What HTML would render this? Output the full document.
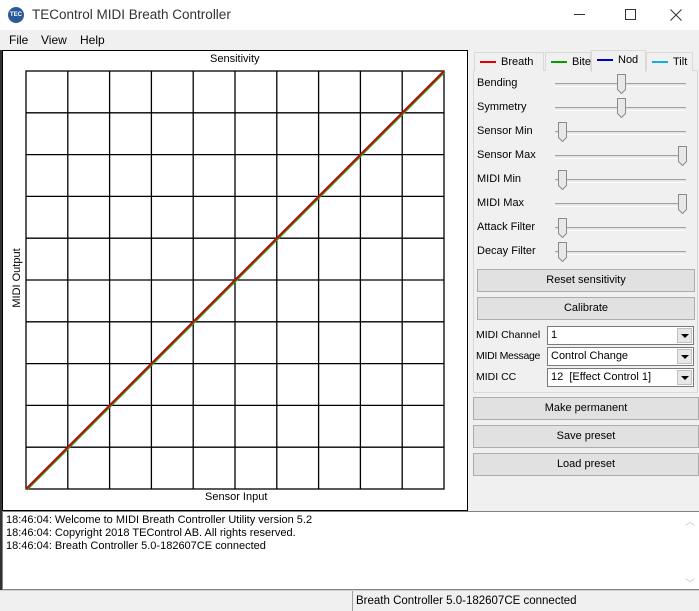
<!DOCTYPE html>
<html><head><style>
*{margin:0;padding:0;box-sizing:border-box}
body{width:699px;height:611px;background:#f0f0f0;font-family:"Liberation Sans",sans-serif;font-size:11px;color:#000;position:relative;overflow:hidden}
.a{position:absolute;white-space:nowrap}
.btn{position:absolute;background:#e1e1e1;border:1px solid #adadad;text-align:center;line-height:21px}
.track{position:absolute;height:4px;border-top:1px solid #a0a0a0;border-bottom:1px solid #fff;background:#e7e7e7;width:131px;left:555px}
.combo{position:absolute;left:547px;width:147px;height:19px;background:#fff;border:1px solid #7a7a7a;padding-left:3px;line-height:17px}
.combo i{position:absolute;right:1px;top:1px;width:15px;height:15px;background:#e8e8e8;border:1px solid #c0c0c0}
.combo i:after{content:"";position:absolute;left:3px;top:5px;border-left:4px solid transparent;border-right:4px solid transparent;border-top:4px solid #000}
.tab{position:absolute;top:52px;height:19px;border:1px solid #d9d9d9;border-bottom:none;background:#f0f0f0;line-height:18px;padding-left:5px;white-space:nowrap}
.tab b{display:inline-block;width:16px;height:2px;vertical-align:middle;margin-right:5px}
</style></head><body>
<div class="a" style="left:0;top:0;width:699px;height:30px;background:#fff"></div>
<div class="a" style="left:8px;top:7px;width:16px;height:16px;border-radius:50%;background:#2a5a9a;color:#fff;font-size:6px;line-height:16px;text-align:center;font-weight:bold">TEC</div>
<div class="a" style="left:32px;top:7px;font-size:13.5px;color:#333">TEControl MIDI Breath Controller</div>
<div class="a" style="left:574px;top:14px;width:11px;height:1px;background:#333"></div>
<div class="a" style="left:625px;top:9px;width:11px;height:11px;border:1px solid #333"></div>
<svg class="a" style="left:670px;top:9px" width="12" height="12"><path d="M0.5 0.5L11.5 11.5M11.5 0.5L0.5 11.5" stroke="#333" stroke-width="1"/></svg>
<div class="a" style="left:9px;top:33px;font-size:12px">File</div>
<div class="a" style="left:41px;top:33px;font-size:12px">View</div>
<div class="a" style="left:80px;top:33px;font-size:12px">Help</div>
<div class="a" style="left:0;top:50px;width:2px;height:540px;background:#333"></div>
<div class="a" style="left:2px;top:50px;width:466px;height:461px;background:#fff;border:1px solid #000"></div>
<div class="a" style="left:210px;top:53px">Sensitivity</div>
<div class="a" style="left:205px;top:491px">Sensor Input</div>
<div class="a" style="left:-13px;top:272px;transform:rotate(-90deg);width:60px;text-align:center">MIDI Output</div>
<svg class="a" style="left:25px;top:70px" width="421" height="421">
<g stroke="#000" stroke-width="1.3" fill="none">
<rect x="1" y="1" width="418" height="418"/>
<path d="M42.8 1V419M84.6 1V419M126.4 1V419M168.2 1V419M210 1V419M251.8 1V419M293.6 1V419M335.4 1V419M377.2 1V419M1 42.8H419M1 84.6H419M1 126.4H419M1 168.2H419M1 210H419M1 251.8H419M1 293.6H419M1 335.4H419M1 377.2H419"/>
</g>
<line x1="1" y1="419" x2="419" y2="1" stroke="#3a9a1a" stroke-width="2" transform="translate(0.8,0.8)"/>
<line x1="1" y1="419" x2="419" y2="1" stroke="#b01010" stroke-width="2"/>
</svg>
<div class="a" style="left:473px;top:70px;width:225px;height:323px;border:1px solid #d9d9d9"></div>
<div class="tab" style="left:474px;width:70px"><b style="background:#e00000"></b>Breath</div>
<div class="tab" style="left:545px;width:46px"><b style="background:#00a000"></b>Bite</div>
<div class="tab" style="left:591px;top:50px;height:22px;width:55px;z-index:2"><b style="background:#0000c0"></b>Nod</div>
<div class="tab" style="left:646px;width:47px"><b style="background:#10b0e0"></b>Tilt</div>
<div class="a" style="left:477px;top:77px">Bending</div>
<div class="a" style="left:477px;top:101px">Symmetry</div>
<div class="a" style="left:477px;top:125px">Sensor Min</div>
<div class="a" style="left:477px;top:149px">Sensor Max</div>
<div class="a" style="left:477px;top:173px">MIDI Min</div>
<div class="a" style="left:477px;top:197px">MIDI Max</div>
<div class="a" style="left:477px;top:221px">Attack Filter</div>
<div class="a" style="left:477px;top:245px">Decay Filter</div>
<div class="track" style="top:83px"></div><div class="track" style="top:107px"></div>
<div class="track" style="top:131px"></div><div class="track" style="top:155px"></div>
<div class="track" style="top:179px"></div><div class="track" style="top:203px"></div>
<div class="track" style="top:227px"></div><div class="track" style="top:251px"></div>
<svg class="a" style="left:0;top:0" width="699" height="270">
<defs><path id="th" d="M0.5 0.5H8.5V15.5L4.5 19.5L0.5 15.5Z" fill="#e8e8e8" stroke="#8a8a8a"/></defs>
<use href="#th" x="617" y="74"/><use href="#th" x="617" y="98"/>
<use href="#th" x="558" y="122"/><use href="#th" x="678" y="146"/>
<use href="#th" x="558" y="170"/><use href="#th" x="678" y="194"/>
<use href="#th" x="558" y="218"/><use href="#th" x="558" y="242"/>
</svg>
<div class="btn" style="left:477px;top:269px;width:218px;height:23px">Reset sensitivity</div>
<div class="btn" style="left:477px;top:297px;width:218px;height:23px">Calibrate</div>
<div class="a" style="left:476px;top:329px;font-size:10.5px">MIDI Channel</div>
<div class="a" style="left:476px;top:350px;font-size:10.5px;letter-spacing:-0.3px">MIDI Message</div>
<div class="a" style="left:476px;top:371px;font-size:10.5px">MIDI CC</div>
<div class="combo" style="top:326px">1<i></i></div>
<div class="combo" style="top:347px">Control Change<i></i></div>
<div class="combo" style="top:368px">12&nbsp; [Effect Control 1]<i></i></div>
<div class="btn" style="left:473px;top:397px;width:226px;height:23px">Make permanent</div>
<div class="btn" style="left:473px;top:425px;width:226px;height:23px">Save preset</div>
<div class="btn" style="left:473px;top:453px;width:226px;height:23px">Load preset</div>
<div class="a" style="left:2px;top:511px;width:697px;height:79px;background:#fff;border:1px solid #828282;border-right:none"></div>
<div class="a" style="left:6px;top:514px;line-height:13px">18:46:04: Welcome to MIDI Breath Controller Utility version 5.2<br>18:46:04: Copyright 2018 TEControl AB. All rights reserved.<br>18:46:04: Breath Controller 5.0-182607CE connected</div>
<div class="a" style="left:685px;top:513px;color:#c0c0c0;font-size:10px">︿</div>
<div class="a" style="left:685px;top:575px;color:#c0c0c0;font-size:10px">﹀</div>
<div class="a" style="left:0;top:590px;width:699px;height:21px;background:#f0f0f0;border-top:1px solid #d0d0d0"></div>
<div class="a" style="left:352px;top:591px;width:1px;height:20px;background:#a0a0a0"></div>
<div class="a" style="left:356px;top:595px;font-size:11.5px">Breath Controller 5.0-182607CE connected</div>
</body></html>
